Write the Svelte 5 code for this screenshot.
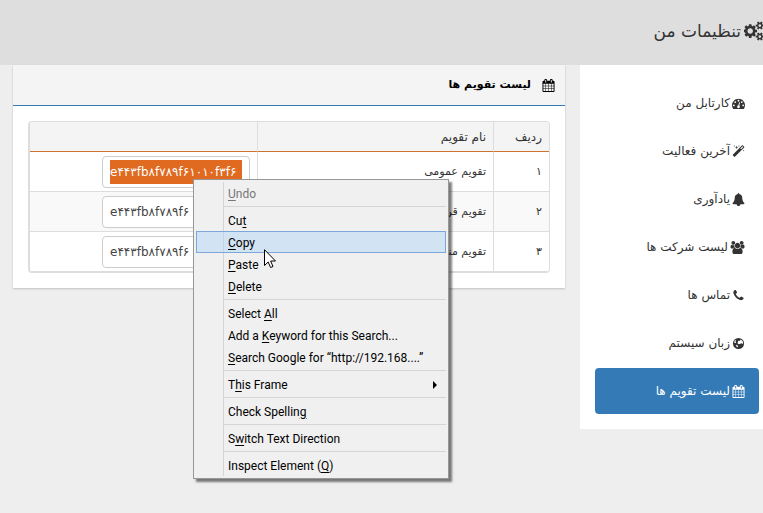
<script>
  const smallCog = 'v140q0 16-149 31-12 27-30 52 51 113 51 138 0 4-4 7-122 71-124 71-8 0-46-47t-52-68q-20 2-30 2t-30-2q-14 21-52 68t-46 47q-2 0-124-71-4-3-4-7 0-25 51-138-18-25-30-52-149-15-149-31v-140q0-16 149-31 13-29 30-52-51-113-51-138 0-4 4-7 4-2 35-20t59-34 30-16q8 0 46 46.500t52 67.500q20-2 30-2t30 2q51-71 92-112l6-2q4 0 124 70 4 3 4 7 0 25-51 138 17 23 30 52 149 15 149 31z';
  const icons = {
    cogs: 'M832 896q0-106-75-181t-181-75-181 75-75 181 75 181 181 75 181-75 75-181zm768 512q0-52-38-90t-90-38-90 38-38 90q0 53 37.500 90.500t90.500 37.500 90.500-37.500 37.500-90.500zm0-1024q0-52-38-90t-90-38-90 38-38 90q0 53 37.500 90.500t90.500 37.500 90.500-37.500 37.500-90.500zm-384 421v185q0 10-7 19.500t-16 10.500l-155 24q-11 35-32 76 34 48 90 115 7 11 7 20 0 12-7 19-23 30-82.500 89.500t-78.500 59.500q-11 0-21-7l-115-90q-37 19-77 31-11 108-23 155-7 24-30 24h-186q-11 0-20-7.500t-10-17.500l-23-153q-34-10-75-31l-118 89q-7 7-20 7-11 0-21-8-144-133-144-160 0-9 7-19 10-14 41-53t47-61q-23-44-35-82l-152-24q-10-1-17-9.500t-7-19.500v-185q0-10 7-19.500t16-10.500l155-24q11-35 32-76-34-48-90-115-7-11-7-20 0-12 7-20 22-30 82-89t79-59q11 0 21 7l115 90q34-18 77-32 11-108 23-154 7-24 30-24h186q11 0 20 7.500t10 17.500l23 153q34 10 75 31l118-89q8-7 20-7 11 0 21 8 144 133 144 160 0 8-7 19-12 16-42 54t-45 60q23 48 34 82l152 23q10 2 17 10.500t7 19.500zM1856 1338' + smallCog + 'M1856 314' + smallCog,
    dashboard: 'M384 1152q0-53-37.500-90.500t-90.500-37.500-90.500 37.500-37.500 90.500 37.500 90.500 90.500 37.500 90.500-37.500 37.500-90.500zm192-448q0-53-37.500-90.500t-90.500-37.500-90.500 37.500-37.500 90.500 37.500 90.500 90.500 37.500 90.500-37.500 37.500-90.500zm428 481l101-382q6-26-7.500-48.500t-38.500-29.500-48 6.500-30 39.500l-101 382q-60 5-107 43.500t-63 98.500q-20 77 20 146t117 89 146-20 89-117q16-60-6-117t-72-91zm660-33q0-53-37.500-90.500t-90.500-37.500-90.500 37.500-37.500 90.500 37.500 90.500 90.500 37.500 90.500-37.500 37.500-90.500zm-640-640q0-53-37.500-90.500t-90.500-37.500-90.500 37.500-37.500 90.500 37.500 90.500 90.500 37.500 90.500-37.500 37.500-90.500zm448 192q0-53-37.500-90.500t-90.500-37.500-90.500 37.500-37.500 90.500 37.500 90.500 90.500 37.500 90.500-37.500 37.500-90.500zm320 448q0 261-141 483-19 29-54 29h-1402q-35 0-54-29-141-221-141-483 0-182 71-348t191-286 286-191 348-71 348 71 286 191 191 286 71 348z',
    magic: 'M1254 581l293-293-107-107-293 293zm447-293q0 27-18 45l-1286 1286q-18 18-45 18t-45-18l-198-198q-18-18-18-45t18-45l1286-1286q18-18 45-18t45 18l198 198q18 18 18 45zm-1351-190l98 30-98 30-30 98-30-98-98-30 98-30 30-98zm350 162l196 60-196 60-60 196-60-196-196-60 196-60 60-196zm930 478l98 30-98 30-30 98-30-98-98-30 98-30 30-98zm-640-640l98 30-98 30-30 98-30-98-98-30 98-30 30-98z',
    bell: 'M1728 1408q0 52-38 90t-90 38h-448q0 106-75 181t-181 75-181-75-75-181h-448q-52 0-90-38t-38-90q50-42 91-88t85-119.500 74.500-158.500 50-206 19.500-260q0-152 117-282.500t307-158.500q-8-19-8-39 0-40 28-68t68-28 68 28 28 68q0 20-8 39 190 28 307 158.500t117 282.500q0 139 19.500 260t50 206 74.500 158.500 85 119.500 91 88z',
    users: 'M657 896q-162 5-265 128h-134q-82 0-138-40.500t-56-118.500q0-353 124-353 6 0 43.500 21t97.500 42.500 119 21.500q67 0 133-23-5 37-5 66 0 159 93 293zm1071 637q0 120-73 189.500t-194 69.500h-874q-121 0-194-69.500t-73-189.500q0-53 3.500-103.500t14-109 26.500-108.500 43-97.500 62-81 85.500-53.500 111.500-20q10 0 43 21.500t73 48 107 48 135 21.500 135-21.500 107-48 73-48 43-21.500q61 0 111.500 20t85.500 53.500 62 81 43 97.500 26.500 108.500 14 109 3.500 103.500zm-1024-1277q0 106-75 181t-181 75-181-75-75-181 75-181 181-75 181 75 75 181zm704 384q0 159-112.500 271.500t-271.500 112.500-271.500-112.500-112.500-271.500 112.500-271.500 271.500-112.500 271.500 112.500 112.500 271.500zm576 225q0 78-56 118.500t-138 40.500h-134q-103-123-265-128 93-134 93-293 0-29-5-66 66 23 133 23 59 0 119-21.500t97.500-42.500 43.500-21q124 0 124 353zm-128-609q0 106-75 181t-181 75-181-75-75-181 75-181 181-75 181 75 75 181z',
    phone: 'M1600 1240q0 27-10 70.500t-21 68.500q-21 50-122 106-94 51-186 51-27 0-52.500-3.500t-57.500-12.500-47.500-14.500-55.500-20.500-49-18q-98-35-175-83-128-79-264.500-215.500t-215.500-264.500q-48-77-83-175-3-9-18-49t-20.500-55.500-14.500-47.500-12.500-57.500-3.500-52.500q0-92 51-186 56-101 106-122 25-11 68.500-21t70.500-10q14 0 21 3 18 6 53 76 11 19 30 54t35 63.500 31 53.500q3 4 17.500 25t21.500 35.500 7 28.500q0 20-28.500 50t-62 55-62 53-28.500 46q0 9 5 22.500t8.500 20.500 14 24 11.500 19q76 137 174 235t235 174q2 1 19 11.500t24 14 20.500 8.500 22.500 5q18 0 46-28.500t53-62 55-62 50-28.500q14 0 28.500 7t35.500 21.500 25 17.500q25 15 53.500 31t63.500 35 54 30q70 35 76 53 3 7 3 21z',
    globe: 'M896 128A768 768 0 1 0 896 1664A768 768 0 1 0 896 128ZM1180 330L1380 470L1500 660L1540 860L1420 960L1380 880L1240 860L1160 940L960 1000L820 920L760 800L860 700L800 600L920 520L1060 560L1120 440ZM360 500L480 420L560 520L480 620L560 760L440 860L300 760ZM560 1060L760 1140L840 1280L740 1420L620 1340Z',
    calendar: 'M192 1664h288v-288h-288v288zm352 0h320v-288h-320v288zm-352-352h288v-320h-288v320zm352 0h320v-320h-320v320zm-352-384h288v-288h-288v288zm736 736h320v-288h-320v288zm-384-736h320v-288h-320v288zm768 736h288v-288h-288v288zm-384-352h320v-320h-320v320zm-352-864v-288q0-13-9.500-22.500t-22.500-9.500h-64q-13 0-22.500 9.500t-9.500 22.500v288q0 13 9.500 22.500t22.500 9.500h64q13 0 22.500-9.500t9.500-22.500zm736 864h288v-320h-288v320zm-384-384h320v-288h-320v288zm384 0h288v-288h-288v288zm32-480v-288q0-13-9.500-22.500t-22.500-9.500h-64q-13 0-22.500 9.500t-9.500 22.500v288q0 13 9.500 22.500t22.500 9.500h64q13 0 22.500-9.500t9.500-22.500zm384-64v1280q0 52-38 90t-90 38h-1408q-52 0-90-38t-38-90v-1280q0-52 38-90t90-38h128v-96q0-66 47-113t113-47h64q66 0 113 47t47 113v96h384v-96q0-66 47-113t113-47h64q66 0 113 47t47 113v96h128q52 0 90 38t38 90z'
  };
  const nav = [
    { icon: 'dashboard', label: 'کارتابل من' },
    { icon: 'magic', label: 'آخرین فعالیت' },
    { icon: 'bell', label: 'یادآوری' },
    { icon: 'users', label: 'لیست شرکت ها', wide: true },
    { icon: 'phone', label: 'تماس ها' },
    { icon: 'globe', label: 'زبان سیستم' },
    { icon: 'calendar', label: 'لیست تقویم ها', active: true }
  ];
  const rows = [
    { n: '۱', name: 'تقویم عمومی', code: 'e۴۴۳fb۸f۷۸۹f۶۱۰۱۰f۳f۶', selected: true },
    { n: '۲', name: 'تقویم قراردادها', code: 'e۴۴۳fb۸f۷۸۹f۶' },
    { n: '۳', name: 'تقویم مناسبت ها', code: 'e۴۴۳fb۸f۷۸۹f۶' }
  ];
  // Each entry: text before the access key, the access key, text after it.
  const groups = [
    [{ t: ['', 'U', 'ndo'], disabled: true }],
    [{ t: ['Cu', 't', ''] }, { t: ['', 'C', 'opy'], hover: true }, { t: ['', 'P', 'aste'] }, { t: ['', 'D', 'elete'] }],
    [{ t: ['Select ', 'A', 'll'] }, { t: ['Add a ', 'K', 'eyword for this Search...'] }, { t: ['', 'S', 'earch Google for “http://192.168....”'] }],
    [{ t: ['T', 'h', 'is Frame'], sub: true }],
    [{ t: ['Check Spellin', 'g', ''] }],
    [{ t: ['S', 'w', 'itch Text Direction'] }],
    [{ t: ['Inspect Element (', 'Q', ')'] }]
  ];
</script>

{#snippet icon(name, wide)}
  <svg class="icon" class:wide viewBox={wide ? '0 0 2048 1792' : '0 0 1792 1792'} fill-rule={name === 'globe' ? 'evenodd' : 'nonzero'} aria-hidden="true"><path d={icons[name]} /></svg>
{/snippet}

<div class="page" dir="rtl">
  <header>
    <h1>{@render icon('cogs', true)}<span>تنظیمات من</span></h1>
  </header>
  <div class="body">
    <nav>
      {#each nav as item}
        <a href="#{item.icon}" class:active={item.active}>{@render icon(item.icon, item.wide)}<span>{item.label}</span></a>
      {/each}
    </nav>
    <main>
      <section>
        <h2>{@render icon('calendar', false)}<span>لیست تقویم ها</span></h2>
        <div class="content">
          <table>
            <thead>
              <tr><th class="num">ردیف</th><th class="name">نام تقویم</th><th></th></tr>
            </thead>
            <tbody>
              {#each rows as row}
                <tr>
                  <td>{row.n}</td>
                  <td>{row.name}</td>
                  <td><input type="text" dir="ltr" aria-label={row.name} value={row.code} class:selected={row.selected} /></td>
                </tr>
              {/each}
            </tbody>
          </table>
        </div>
      </section>
    </main>
  </div>
</div>

<div class="menu" role="menu">
  {#each groups as group}
    <div class="group" role="group">
      {#each group as item}
        <button role="menuitem" disabled={item.disabled} class:hover={item.hover}>
          <span>{item.t[0]}<u>{item.t[1]}</u>{item.t[2]}</span>
          {#if item.sub}<svg class="arrow" viewBox="0 0 4 8" aria-hidden="true"><path d="M0 0L4 4L0 8Z" /></svg>{/if}
        </button>
      {/each}
    </div>
  {/each}
</div>
<svg class="cursor" viewBox="0 0 12 19" aria-hidden="true"><path d="M.5 .7V16.500L4.200 13L6.600 18.500L9 17.500L6.600 12H11.500Z" fill="#fff" stroke="#000" stroke-width="1" /></svg>

<style>
  :global(body) {
    margin: 0;
    background: #eee;
  }
  .page {
    font: 12px/20px 'DejaVu Sans', sans-serif;
    color: #333;
    overflow: hidden;
  }
  .icon {
    width: 13px;
    height: 13px;
    fill: currentColor;
    flex: none;
  }
  .icon.wide {
    width: 15px;
  }
  header {
    background: #dedede;
    height: 65px;
  }
  h1 {
    margin: 0 -3px 0 0;
    padding-top: 16px;
    display: flex;
    align-items: center;
    gap: 3px;
    font-size: 17px;
    line-height: 30px;
    font-weight: 400;
  }
  h1 .icon.wide {
    width: 22px;
    height: 20px;
  }
  .body {
    display: flex;
    align-items: flex-start;
    gap: 15px;
    padding-left: 13px;
  }
  nav {
    width: 164px;
    flex: none;
    display: flex;
    flex-direction: column;
    gap: 2px;
    padding: 15px 4px 15px 15px;
    background: #fff;
  }
  nav a {
    display: flex;
    align-items: center;
    gap: 2px;
    height: 46px;
    padding: 0 14px;
    border-radius: 4px;
    color: #333;
    text-decoration: none;
  }
  nav a.active {
    background: #337ab7;
    color: #fff;
  }
  main {
    flex: 1;
    min-width: 0;
  }
  section {
    background: #fff;
    box-shadow: 0 1px 2px rgba(0, 0, 0, 0.2);
  }
  h2 {
    margin: 0;
    display: flex;
    align-items: center;
    gap: 11px;
    height: 40px;
    padding: 0 10px;
    background: #f4f4f4;
    border-bottom: 1px solid #337ab7;
    font-size: 11px;
    font-weight: 700;
    color: #000;
  }
  .content {
    padding: 15px;
  }
  table {
    width: 100%;
    table-layout: fixed;
    border-collapse: separate;
    border-spacing: 0;
    border: 1px solid #ddd;
    border-width: 1px 1px 1px 2px;
    border-radius: 4px;
    overflow: hidden;
  }
  th,
  td {
    box-sizing: border-box;
    text-align: right;
    padding: 4px 7px;
    border-left: 1px solid #ddd;
  }
  th:last-child,
  td:last-child {
    border-left: 0;
  }
  th {
    height: 30px;
    font-weight: 400;
    background: #f4f4f4;
    border-bottom: 1px solid #cc7430;
  }
  .num {
    width: 56px;
  }
  .name {
    width: 236px;
  }
  td {
    height: 40px;
    padding: 3px 7px;
    border-bottom: 1px solid #ddd;
    font-size: 11px;
  }
  tr:nth-child(even) td {
    background: #f9f9f9;
  }
  input {
    box-sizing: border-box;
    display: block;
    width: 148px;
    height: 32px;
    padding: 3px 7px;
    border: 1px solid #ccc;
    border-radius: 4px;
    background: #fff;
    color: #444;
    font: 12px/24px 'DejaVu Sans', sans-serif;
  }
  input.selected {
    background: linear-gradient(#e06a20, #e06a20) content-box, #fff;
    color: #fff;
  }
  .menu {
    position: absolute;
    left: 193px;
    top: 179px;
    box-sizing: border-box;
    width: 256px;
    padding: 2px;
    border: 1px solid #979797;
    background: linear-gradient(#d5d5d5, #d5d5d5) 29px 2px / 1px calc(100% - 4px) no-repeat, #f0f0f0;
    box-shadow: 3px 3px 2px rgba(0, 0, 0, 0.5);
    font: 12px/20px Roboto, sans-serif;
  }
  .group + .group::before {
    content: '';
    display: block;
    height: 1px;
    margin: 2px 0 2px 28px;
    background: #d5d5d5;
  }
  button {
    display: flex;
    align-items: center;
    justify-content: space-between;
    width: 100%;
    height: 22px;
    padding: 1px 8px 0 31px;
    border: 1px solid transparent;
    background: none;
    color: #000;
    font: inherit;
    white-space: nowrap;
  }
  button:disabled {
    color: #777;
  }
  button.hover {
    background: rgba(174, 212, 248, 0.45);
    border-color: #7da7d8;
  }
  u {
    text-underline-offset: 2px;
  }
  .arrow {
    width: 4px;
    height: 8px;
  }
  .cursor {
    position: absolute;
    left: 264px;
    top: 249px;
    width: 12px;
    height: 19px;
  }
</style>
